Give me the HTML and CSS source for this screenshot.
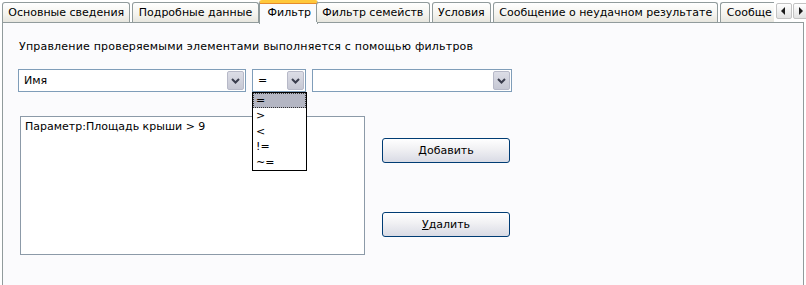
FILE: index.html
```html
<!DOCTYPE html>
<html lang="ru">
<head>
    <meta charset="UTF-8">
    <title>Фильтр</title>
    <link rel="stylesheet" href="styles.css">
</head>
<body>
    <div class="window">
        <div class="tabstrip">
            <div class="tab">Основные сведения</div>
            <div class="tab">Подробные данные</div>
            <div class="tab active">Фильтр</div>
            <div class="tab">Фильтр семейств</div>
            <div class="tab">Условия</div>
            <div class="tab">Сообщение о неудачном результате</div>
            <div class="tab cut">Сообще</div>
            <div class="scroller">
                <span class="scroll-btn">
                    <svg width="7" height="8" viewBox="0 0 7 8"><path d="M5 0 L1 4 L5 8 Z" fill="#1c1c1c"/></svg>
                </span>
                <span class="scroll-btn">
                    <svg width="7" height="8" viewBox="0 0 7 8"><path d="M2 0 L6 4 L2 8 Z" fill="#1c1c1c"/></svg>
                </span>
            </div>
        </div>

        <div class="panel">
            <p class="hint">Управление проверяемыми элементами выполняется с помощью фильтров</p>

            <div class="filter-row">
                <div class="combo combo-name">
                    <span class="combo-text">Имя</span>
                    <span class="combo-btn"><svg width="9" height="6" viewBox="0 0 9 6"><path d="M1 1 L4.5 4.5 L8 1" fill="none" stroke="#3a3d4d" stroke-width="2"/></svg></span>
                </div>
                <div class="combo combo-op">
                    <span class="combo-text">=</span>
                    <span class="combo-btn"><svg width="9" height="6" viewBox="0 0 9 6"><path d="M1 1 L4.5 4.5 L8 1" fill="none" stroke="#3a3d4d" stroke-width="2"/></svg></span>
                    <ul class="droplist">
                        <li class="selected">=</li>
                        <li>&gt;</li>
                        <li>&lt;</li>
                        <li>!=</li>
                        <li>~=</li>
                    </ul>
                </div>
                <div class="combo combo-value">
                    <span class="combo-text"></span>
                    <span class="combo-btn"><svg width="9" height="6" viewBox="0 0 9 6"><path d="M1 1 L4.5 4.5 L8 1" fill="none" stroke="#3a3d4d" stroke-width="2"/></svg></span>
                </div>
            </div>

            <div class="body-row">
                <div class="listbox">Параметр:Площадь крыши &gt; 9</div>
                <div class="actions">
                    <button class="btn"><u>Д</u>обавить</button>
                    <button class="btn"><u>У</u>далить</button>
                </div>
            </div>
        </div>
    </div>
</body>
</html>
```

FILE: styles.css
```css
/* ===== base ===== */
*{margin:0;padding:0;box-sizing:border-box;}
body{
    background:#fff;
    font-family:"DejaVu Sans",Verdana,sans-serif;
    font-size:11px;
    color:#000;
    overflow:hidden;
}
.window{width:806px;height:285px;padding:0 0 0 2px;}

/* ===== tabs ===== */
.tabstrip{display:flex;align-items:flex-end;height:22px;position:relative;z-index:2;}
.tab{
    height:20px;margin-right:2px;padding:0 5.3px;
    display:flex;align-items:center;white-space:nowrap;
    border:1px solid #919b9c;border-bottom:none;border-radius:3px 3px 0 0;
    background:linear-gradient(#fff 0%,#f4f3ee 60%,#e7e6df 100%);
}
.tab.active{
    height:24px;margin:0 0 -2px -2px;padding:0 6px 2px 8px;
    background:#fbfbfd;
    border-top:3px solid #ffc83c;
    box-shadow:inset 0 1px 0 #e68b2c;
}
.tab.active + .tab{margin-left:-2px;}
.tab.cut{padding-right:2px;border-right:none;border-radius:3px 0 0 0;}
.scroller{display:flex;gap:1px;margin-left:auto;margin-right:3px;align-self:flex-start;padding-top:3px;}
.scroll-btn{
    width:16px;height:16px;display:flex;align-items:center;justify-content:center;
    border:1px solid #c3c3c3;border-radius:2px;
    background:linear-gradient(#fff,#e2e2e2);
}

/* ===== panel ===== */
.panel{
    height:263px;width:802px;
    border:1px solid #919b9c;border-bottom:none;
    background:#fbfbfd;
    padding:17px 0 0 15px;
}
.hint{line-height:14px;padding-left:1px;letter-spacing:.2px;}

/* ===== combos ===== */
.filter-row{display:flex;gap:6px;margin-top:15px;}
.combo{
    position:relative;height:23px;display:flex;align-items:center;
    background:#fff;border:1px solid #7f9db9;padding:1px;
}
.combo-name{width:228px;}
.combo-op{width:54px;}
.combo-value{width:200px;}
.combo-text{flex:1;padding-left:4px;}
.combo-btn{
    width:17px;height:19px;display:flex;align-items:center;justify-content:center;
    background:linear-gradient(#dcdde6,#c6c8d4);border:1px solid #b7b9c8;border-radius:2px;
}
.droplist{
    position:absolute;top:22px;left:-1px;width:55px;
    list-style:none;background:#fff;border:1px solid #000;padding:0;
}
.droplist li{height:15.4px;line-height:15px;padding-left:3px;}
.droplist li.selected{background:#b4b6c3;outline:1px dotted #333;outline-offset:-1px;}

/* ===== list + buttons ===== */
.body-row{display:flex;gap:17px;margin-top:24px;padding-left:2px;}
.listbox{
    width:345px;height:139px;background:#fff;border:1px solid #8c9aa8;
    padding:3px 4px;line-height:14px;
}
.actions{display:flex;flex-direction:column;gap:49px;padding-top:22px;}
.btn{
    width:128px;height:25px;font:inherit;color:#000;
    border:1px solid #003c74;border-radius:3px;
    background:linear-gradient(#fff 0%,#f0f0f3 45%,#d9dbe5 100%);
}
.btn u{text-decoration:underline;}
```
